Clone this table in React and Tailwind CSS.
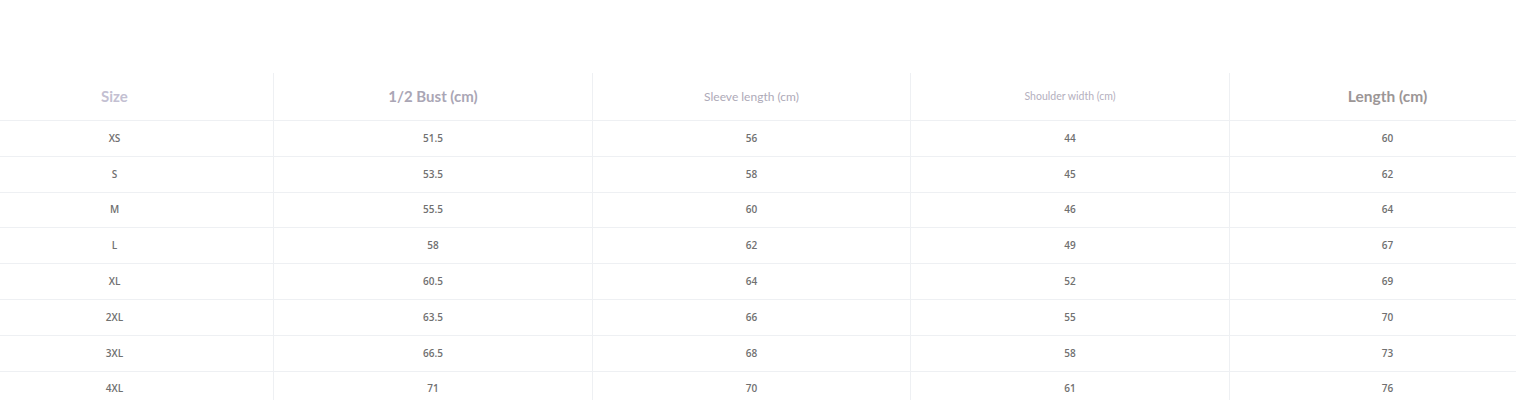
import React from "react";

const rows = [
  ["XS", "51.5", "56", "44", "60"],
  ["S", "53.5", "58", "45", "62"],
  ["M", "55.5", "60", "46", "64"],
  ["L", "58", "62", "49", "67"],
  ["XL", "60.5", "64", "52", "69"],
  ["2XL", "63.5", "66", "55", "70"],
  ["3XL", "66.5", "68", "58", "73"],
  ["4XL", "71", "70", "61", "76"],
];

export default function App() {
  return (
    <div className="w-[1516px] h-[400px] overflow-hidden bg-white">
      <div className="pt-[73px] ml-[-44px] w-[1594px]">
        <div className="grid grid-cols-[317px_319px_318px_319px_316px] h-[48px] border-b border-[#eef0f3] font-['Lato',sans-serif] font-bold">
          <div className="flex items-center justify-center text-[15px] text-[#c3c0d2]">Size</div>
          <div className="flex items-center justify-center text-[15px] text-[#aaa6b5] border-l border-[#eef0f3]">1/2 Bust (cm)</div>
          <div className="flex items-center justify-center text-[12px] font-normal text-[#aeaab8] border-l border-[#eef0f3]">Sleeve length (cm)</div>
          <div className="flex items-center justify-center text-[10.5px] font-normal text-[#b4b0be] border-l border-[#eef0f3]">Shoulder width (cm)</div>
          <div className="flex items-center justify-center text-[15.5px] text-[#9c9696] border-l border-[#eef0f3]">Length (cm)</div>
        </div>
        {rows.map((r, i) => (
          <div
            key={i}
            className="grid grid-cols-[317px_319px_318px_319px_316px] h-[35.8px] border-b border-[#eef0f3] font-['Open_Sans',sans-serif] font-semibold text-[10px] text-[#707070]"
          >
            {r.map((c, j) => (
              <div
                key={j}
                className={
                  "flex items-center justify-center " +
                  (j > 0 ? "border-l border-[#eef0f3]" : "")
                }
              >
                {c}
              </div>
            ))}
          </div>
        ))}
      </div>
    </div>
  );
}
